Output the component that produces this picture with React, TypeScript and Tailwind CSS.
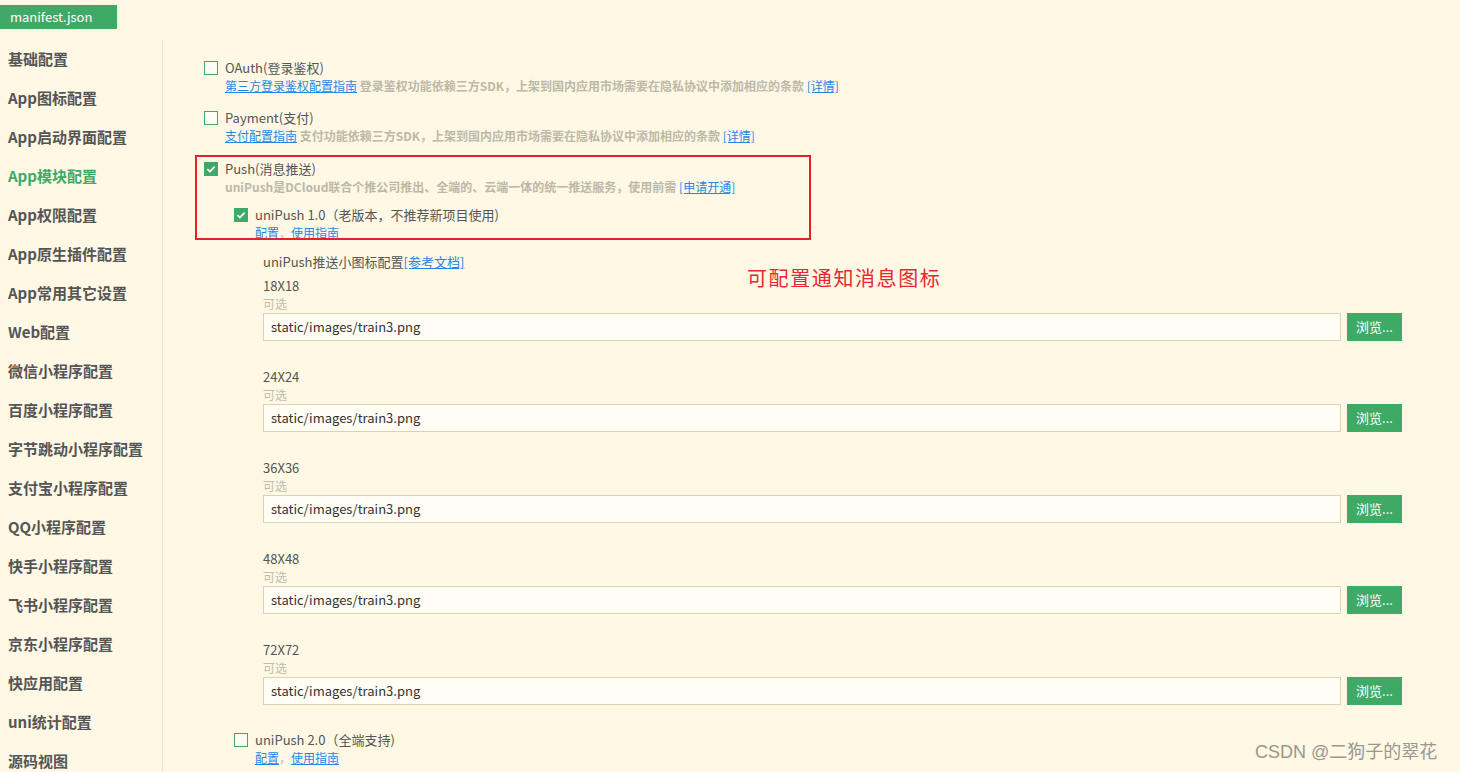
import type { ReactNode } from "react";

const MENU = [
  "基础配置",
  "App图标配置",
  "App启动界面配置",
  "App模块配置",
  "App权限配置",
  "App原生插件配置",
  "App常用其它设置",
  "Web配置",
  "微信小程序配置",
  "百度小程序配置",
  "字节跳动小程序配置",
  "支付宝小程序配置",
  "QQ小程序配置",
  "快手小程序配置",
  "飞书小程序配置",
  "京东小程序配置",
  "快应用配置",
  "uni统计配置",
  "源码视图",
];

const ICONS = ["18X18", "24X24", "36X36", "48X48", "72X72"];

function Checkbox({ checked }: { checked?: boolean }) {
  if (checked) {
    return (
      <span className="flex h-[14px] w-[14px] shrink-0 items-center justify-center bg-[#3fa966]">
        <svg viewBox="0 0 14 14" className="h-[14px] w-[14px]" fill="none" stroke="#fff" strokeWidth="1.6">
          <path d="M3.4 7.2 L5.9 9.6 L10.6 4.6" />
        </svg>
      </span>
    );
  }
  return <span className="h-[14px] w-[14px] shrink-0 border border-[#3fa966] bg-[#fffdf3]" />;
}

function Option({ checked, label, children }: { checked?: boolean; label: string; children?: ReactNode }) {
  return (
    <div>
      <div className="flex h-[18px] items-center">
        <Checkbox checked={checked} />
        <span className="ml-[7px] text-[13px] leading-[18px] text-[#555]">{label}</span>
      </div>
      <div className="ml-[21px] h-[18px] text-[12px] leading-[18px]">{children}</div>
    </div>
  );
}

function Link({ children }: { children: ReactNode }) {
  return <span className="text-[#1e88e5] underline">{children}</span>;
}

function Desc({ children }: { children: ReactNode }) {
  return <span className="font-bold text-[#bdb8a8]">{children}</span>;
}

function IconRow({ size }: { size: string }) {
  return (
    <div className="mb-[27px]">
      <div className="h-[18px] text-[13px] leading-[18px] text-[#555]">{size}</div>
      <div className="h-[17px] text-[12px] leading-[17px] text-[#c2bdae]">可选</div>
      <div className="mt-px flex h-[28px] gap-[6px]">
        <div className="flex w-[1078px] items-center border border-[#dcd3b2] bg-[#fffdf4] px-[7px] text-[13px] text-[#333]">
          static/images/train3.png
        </div>
        <button className="h-[28px] w-[55px] bg-[#3fa966] text-[13px] text-white">浏览...</button>
      </div>
    </div>
  );
}

export default function App() {
  return (
    <div
      className="relative h-[772px] w-full overflow-hidden bg-[#fef8e5]"
      style={{ fontFamily: '"Noto Sans CJK SC", "Microsoft YaHei", sans-serif' }}
    >
      <div className="h-[40px] pt-[5px]">
        <div className="flex h-[24px] w-[117px] items-center bg-[#3fa966] pl-[10px] text-[13px] text-white">
          manifest.json
        </div>
      </div>

      <div className="flex">
        <div className="h-[732px] w-[163px] shrink-0 border-r border-[#ece3c6]">
          {MENU.map((m) => (
            <div
              key={m}
              className={
                m === "App模块配置"
                  ? "flex h-[39px] items-center pl-[8px] text-[15px] font-bold text-[#3fa966]"
                  : "flex h-[39px] items-center pl-[8px] text-[15px] font-bold text-[#555]"
              }
            >
              {m}
            </div>
          ))}
        </div>

        <div className="flex-1 pl-[41px] pt-[19px]">
          <Option label="OAuth(登录鉴权)">
            <Link>第三方登录鉴权配置指南</Link> <Desc>登录鉴权功能依赖三方SDK，上架到国内应用市场需要在隐私协议中添加相应的条款</Desc>{" "}
            <Link>[详情]</Link>
          </Option>
          <div className="mt-[14px]">
            <Option label="Payment(支付)">
              <Link>支付配置指南</Link> <Desc>支付功能依赖三方SDK，上架到国内应用市场需要在隐私协议中添加相应的条款</Desc>{" "}
              <Link>[详情]</Link>
            </Option>
          </div>

          <div className="relative mt-[15px]">
            <div className="pointer-events-none absolute left-[-9px] top-[-5px] h-[85px] w-[616px] border-2 border-[#e8202a]" />
            <Option checked label="Push(消息推送)">
              <Desc>uniPush是DCloud联合个推公司推出、全端的、云端一体的统一推送服务，使用前需</Desc> <Link>[申请开通]</Link>
            </Option>
            <div className="ml-[30px] mt-[10px]">
              <Option checked label="uniPush 1.0（老版本，不推荐新项目使用)">
                <Link>配置</Link>
                <span className="text-[#bbb]">，</span>
                <Link>使用指南</Link>
              </Option>
            </div>
          </div>

          <div className="ml-[59px] mt-[11px]">
            <div className="h-[18px] text-[13px] leading-[18px] text-[#555]">
              uniPush推送小图标配置<Link>[参考文档]</Link>
            </div>
            <div className="mt-[6px]">
              {ICONS.map((s) => (
                <IconRow key={s} size={s} />
              ))}
            </div>
          </div>

          <div className="ml-[30px] mt-[-1px]">
            <Option label="uniPush 2.0（全端支持)">
              <Link>配置</Link>
              <span className="text-[#bbb]">，</span>
              <Link>使用指南</Link>
            </Option>
          </div>
        </div>
      </div>

      <div className="absolute left-[747px] top-[265px] text-[20px] leading-[26px] tracking-[1.6px] text-[#e8282f]">
        可配置通知消息图标
      </div>
      <div
        className="absolute left-[1255px] top-[740px] text-[18px] leading-[24px] text-[#9a978e]"
        style={{ fontFamily: '"Liberation Sans", "Noto Sans CJK SC", sans-serif' }}
      >
        CSDN @二狗子的翠花
      </div>
    </div>
  );
}
